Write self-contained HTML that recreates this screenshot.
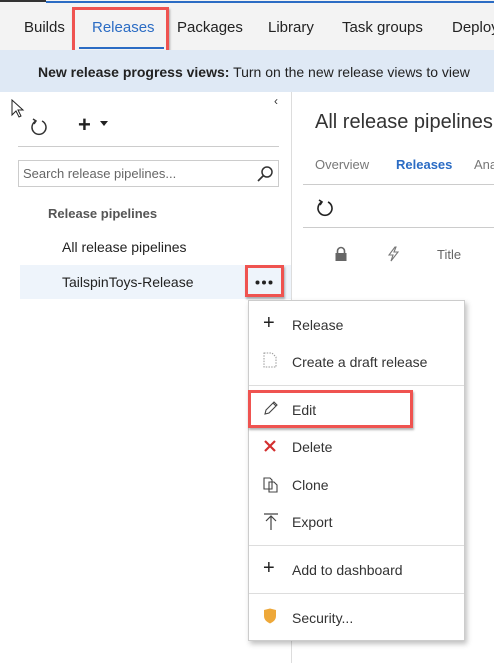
<!DOCTYPE html>
<html><head><style>
*{margin:0;padding:0;box-sizing:border-box}
body{width:494px;height:663px;overflow:hidden;background:#fff;font-family:"Liberation Sans",sans-serif;color:#222;position:relative}
.a{position:absolute;white-space:nowrap}
.nav{font-size:15px;color:#222;top:19px}
.mi{position:absolute;left:43px;font-size:14px;color:#333}
.ic{position:absolute;left:14px}
</style></head><body>
<div class="a" style="left:0;top:0;width:494px;height:50px;background:#f3f3f3"></div>
<div class="a" style="left:0;top:0;width:46px;height:2px;background:#333"></div>
<div class="a" style="left:46px;top:1px;width:448px;height:2px;background:#2b6cc4"></div>
<div class="a nav" style="left:24px">Builds</div>
<div class="a nav" style="left:92px;color:#2b6cc4">Releases</div>
<div class="a" style="left:79px;top:47px;width:85px;height:2px;background:#2b6cc4"></div>
<div class="a" style="left:72px;top:7px;width:97px;height:49px;border:3px solid #ef5350;box-shadow:1px 2px 2px rgba(0,0,0,.3)"></div>
<div class="a nav" style="left:177px">Packages</div>
<div class="a nav" style="left:268px">Library</div>
<div class="a nav" style="left:342px">Task groups</div>
<div class="a nav" style="left:452px">Deploy</div>
<div class="a" style="left:0;top:50px;width:494px;height:42px;background:#dfe9f5"></div>
<div class="a" style="left:38px;top:64px;font-size:14px"><b>New release progress views:</b> Turn on the new release views to view</div>
<!-- left -->
<div class="a" style="left:291px;top:92px;width:1px;height:571px;background:#ddd"></div>
<svg class="a" style="left:11px;top:99px" width="14" height="20" viewBox="0 0 14 20"><path d="M1 1v15l4-4 3 6 2-1-3-6h5z" fill="#fff" stroke="#222" stroke-width="1"/></svg>
<div class="a" style="left:274px;top:94px;font-size:12px;color:#333">&#8249;</div>
<svg class="a" style="left:29px;top:117px" width="20" height="20" viewBox="0 0 20 20"><path d="M7 4A7 7 0 1 0 13 4" fill="none" stroke="#333" stroke-width="1.5"/><path d="M4 2l3 2-2 3" fill="none" stroke="#333" stroke-width="1.5"/></svg>
<div class="a" style="left:78px;top:112px;font-size:22px;font-weight:bold">+</div>
<div class="a" style="left:100px;top:121px;width:0;height:0;border:4px solid transparent;border-top:5px solid #222"></div>
<div class="a" style="left:18px;top:146px;width:261px;height:1px;background:#ccc"></div>
<div class="a" style="left:18px;top:160px;width:261px;height:27px;border:1px solid #ccc"></div>
<div class="a" style="left:23px;top:166px;font-size:13px;color:#666">Search release pipelines...</div>
<svg class="a" style="left:256px;top:165px" width="18" height="18" viewBox="0 0 18 18"><circle cx="11" cy="7" r="5" fill="none" stroke="#333" stroke-width="1.5"/><path d="M7.5 10.5L2 16" stroke="#333" stroke-width="1.7"/></svg>
<div class="a" style="left:48px;top:206px;font-size:13px;font-weight:bold;color:#555">Release pipelines</div>
<div class="a" style="left:62px;top:239px;font-size:14px">All release pipelines</div>
<div class="a" style="left:20px;top:265px;width:271px;height:34px;background:#eef4fb"></div>
<div class="a" style="left:62px;top:274px;font-size:14px">TailspinToys-Release</div>
<div class="a" style="left:245px;top:265px;width:39px;height:32px;border:3px solid #ef5350;box-shadow:1px 2px 2px rgba(0,0,0,.3)"></div>
<svg class="a" style="left:255px;top:280px" width="18" height="5" viewBox="0 0 18 5"><circle cx="2.5" cy="2.5" r="2" fill="#222"/><circle cx="9" cy="2.5" r="2" fill="#222"/><circle cx="15.5" cy="2.5" r="2" fill="#222"/></svg>
<!-- right -->
<div class="a" style="left:315px;top:111px;font-size:20px;color:#333">All release pipelines</div>
<div class="a" style="left:315px;top:157px;font-size:13px;color:#777">Overview</div>
<div class="a" style="left:396px;top:157px;font-size:13px;font-weight:bold;color:#2b6cc4">Releases</div>
<div class="a" style="left:474px;top:157px;font-size:13px;color:#777">Ana</div>
<div class="a" style="left:303px;top:184px;width:191px;height:1px;background:#ccc"></div>
<svg class="a" style="left:315px;top:198px" width="20" height="20" viewBox="0 0 20 20"><path d="M7 4A7 7 0 1 0 13 4" fill="none" stroke="#222" stroke-width="1.6"/><path d="M4 2l3 2-2 3" fill="none" stroke="#222" stroke-width="1.6"/></svg>
<div class="a" style="left:303px;top:227px;width:191px;height:1px;background:#ccc"></div>
<svg class="a" style="left:334px;top:246px" width="14" height="16" viewBox="0 0 14 16"><path d="M3.5 7V5a3.5 3.5 0 0 1 7 0v2" fill="none" stroke="#666" stroke-width="1.6"/><rect x="1.5" y="7" width="11" height="8" fill="#666"/></svg>
<svg class="a" style="left:386px;top:246px" width="14" height="16" viewBox="0 0 14 16"><path d="M9 1L3 9h4l-2 6 7-9H8l2-5z" fill="none" stroke="#777" stroke-width="1.1"/></svg>
<div class="a" style="left:437px;top:247px;font-size:13px;color:#666">Title</div>
<!-- menu -->
<div class="a" style="left:248px;top:300px;width:217px;height:341px;background:#fff;border:1px solid #ccc;box-shadow:2px 3px 5px rgba(0,0,0,.25)">
<div class="ic" style="top:12px;font-size:20px;line-height:20px">+</div><div class="mi" style="top:16px">Release</div>
<svg class="ic" style="top:51px" width="14" height="16" viewBox="0 0 14 16"><path d="M1 1h8l4 4v10H1z" fill="none" stroke="#999" stroke-dasharray="1.5 1.2"/></svg><div class="mi" style="top:53px">Create a draft release</div>
<div class="a" style="left:0;top:84px;width:215px;height:1px;background:#ddd"></div>
<svg class="ic" style="top:99px" width="16" height="16" viewBox="0 0 16 16"><path d="M2 14l1-4 8-8 3 3-8 8z M10 3l3 3" fill="none" stroke="#444" stroke-width="1.1"/></svg><div class="mi" style="top:101px">Edit</div>
<svg class="ic" style="top:138px" width="14" height="14" viewBox="0 0 14 14"><path d="M2 2l10 10M12 2L2 12" stroke="#d32f2f" stroke-width="2.2"/></svg><div class="mi" style="top:138px">Delete</div>
<svg class="ic" style="top:176px" width="16" height="16" viewBox="0 0 16 16"><path d="M1 1h6l2 2v9H1z M6 5h5l3 3v7H6z" fill="#fff" stroke="#444" stroke-width="1.1"/></svg><div class="mi" style="top:176px">Clone</div>
<svg class="ic" style="top:212px" width="16" height="18" viewBox="0 0 16 18"><path d="M1 1h14M8 3v14M3 8l5-5 5 5" fill="none" stroke="#444" stroke-width="1.2"/></svg><div class="mi" style="top:213px">Export</div>
<div class="a" style="left:0;top:244px;width:215px;height:1px;background:#ddd"></div>
<div class="ic" style="top:257px;font-size:20px;line-height:20px">+</div><div class="mi" style="top:261px">Add to dashboard</div>
<div class="a" style="left:0;top:292px;width:215px;height:1px;background:#ddd"></div>
<svg class="ic" style="top:307px" width="14" height="16" viewBox="0 0 14 16"><path d="M1 2l6-1.5L13 2v6c0 4-3 6-6 7.5C4 14 1 12 1 8z" fill="#eea839"/></svg><div class="mi" style="top:309px">Security...</div>
</div>
<div style="position:absolute;left:248px;top:390px;width:165px;height:38px;border:3px solid #ef5350;box-shadow:1px 2px 2px rgba(0,0,0,.3)"></div>
</body></html>
